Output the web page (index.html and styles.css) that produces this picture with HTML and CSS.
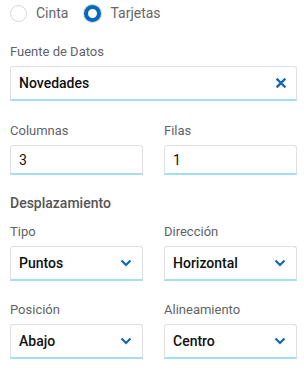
FILE: index.html
```
<!DOCTYPE html>
<html lang="es">
<head>
    <meta charset="UTF-8">
    <title>Configuración</title>
    <link rel="stylesheet" href="styles.css">
</head>
<body>
    <div class="panel">
        <div class="radios">
            <label class="radio"><span class="dot"></span>Cinta</label>
            <label class="radio checked"><span class="dot"></span>Tarjetas</label>
        </div>

        <div class="field">
            <div class="label">Fuente de Datos</div>
            <div class="box big">
                <span class="value">Novedades</span>
                <svg class="icon" width="10" height="10" viewBox="0 0 10 10"><path d="M1.5 1.5 L8.5 8.5 M8.5 1.5 L1.5 8.5" stroke="#1467b5" stroke-width="2.4" stroke-linecap="square"/></svg>
            </div>
        </div>

        <div class="row">
            <div class="field">
                <div class="label">Columnas</div>
                <div class="box small"><span class="value plain">3</span></div>
            </div>
            <div class="field">
                <div class="label">Filas</div>
                <div class="box small"><span class="value plain">1</span></div>
            </div>
        </div>

        <h3 class="section">Desplazamiento</h3>

        <div class="row">
            <div class="field">
                <div class="label">Tipo</div>
                <div class="box big">
                    <span class="value">Puntos</span>
                    <svg class="icon" width="12" height="8" viewBox="0 0 12 8"><path d="M1.5 1.5 L6 6 L10.5 1.5" fill="none" stroke="#1467b5" stroke-width="2.2"/></svg>
                </div>
            </div>
            <div class="field">
                <div class="label">Dirección</div>
                <div class="box big">
                    <span class="value">Horizontal</span>
                    <svg class="icon" width="12" height="8" viewBox="0 0 12 8"><path d="M1.5 1.5 L6 6 L10.5 1.5" fill="none" stroke="#1467b5" stroke-width="2.2"/></svg>
                </div>
            </div>
        </div>

        <div class="row">
            <div class="field">
                <div class="label">Posición</div>
                <div class="box big">
                    <span class="value">Abajo</span>
                    <svg class="icon" width="12" height="8" viewBox="0 0 12 8"><path d="M1.5 1.5 L6 6 L10.5 1.5" fill="none" stroke="#1467b5" stroke-width="2.2"/></svg>
                </div>
            </div>
            <div class="field">
                <div class="label">Alineamiento</div>
                <div class="box big">
                    <span class="value">Centro</span>
                    <svg class="icon" width="12" height="8" viewBox="0 0 12 8"><path d="M1.5 1.5 L6 6 L10.5 1.5" fill="none" stroke="#1467b5" stroke-width="2.2"/></svg>
                </div>
            </div>
        </div>
    </div>
</body>
</html>
```

FILE: styles.css
```
body {
    margin: 0;
    font-family: Roboto, "Liberation Sans", sans-serif;
    background: #fff;
    color: #222;
}
.panel {
    padding: 4px 7px 0 10px;
}
.radios {
    display: flex;
    gap: 16px;
    height: 18px;
    align-items: center;
}
.radio {
    display: flex;
    align-items: center;
    gap: 9px;
    font-size: 14px;
    color: #666;
}
.radio .dot {
    width: 15px;
    height: 15px;
    border: 1px solid #d6d6d6;
    border-radius: 50%;
    box-sizing: content-box;
}
.radio.checked .dot {
    width: 9px;
    height: 9px;
    border: 4px solid #0b67b8;
    background: #fff;
    box-shadow: 0 0 0 1px rgba(11,103,184,0.25);
}
.field {
    display: flex;
    flex-direction: column;
}
.label {
    font-size: 13px;
    color: #5f6368;
    margin-top: 22px;
    margin-bottom: 7px;
    line-height: 15px;
}
.box {
    display: flex;
    align-items: center;
    justify-content: space-between;
    border: 1px solid #e0e0e0;
    border-bottom: 2px solid #a4def4;
    border-radius: 3px 3px 0 0;
    padding: 0 10px 0 8px;
    box-sizing: border-box;
}
.box.big {
    height: 35px;
}
.box.small {
    height: 30px;
}
.value {
    font-size: 14px;
    font-weight: 500;
    color: #111;
}
.value.plain {
    font-weight: 400;
}
.row {
    display: flex;
    gap: 21px;
}
.row .field {
    flex: 1;
}
.section {
    margin: 20px 0 0;
    font-size: 14px;
    font-weight: 500;
    color: #555;
    line-height: 16px;
}
.section + .row .label {
    margin-top: 13px;
}
.section + .row + .row .label {
    margin-top: 21px;
}
```
